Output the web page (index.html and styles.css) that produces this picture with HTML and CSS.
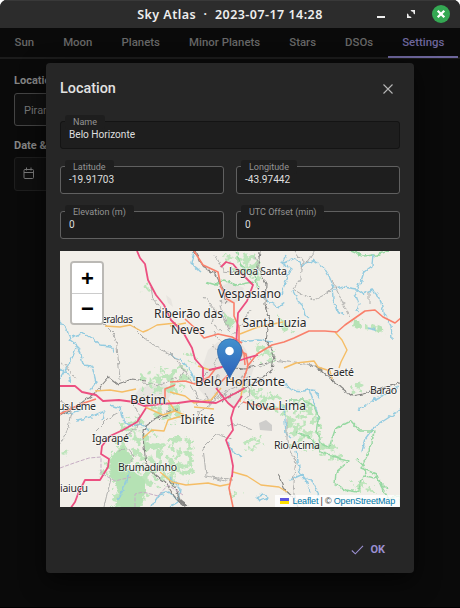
FILE: index.html
```html
<!DOCTYPE html>
<html lang="en">
<head>
<meta charset="utf-8">
<title>Sky Atlas</title>
<link rel="stylesheet" href="styles.css">
</head>
<body>
<div class="window">
  <header class="titlebar">
    <span class="title">Sky Atlas &nbsp;·&nbsp; 2023-07-17 14:28</span>
    <div class="controls">
      <svg width="10" height="18" viewBox="0 0 10 18"><path d="M1 11h8v2H1z" fill="#eee"/></svg>
      <svg width="10" height="18" viewBox="0 0 10 18"><path d="M4.500 5H9v4.500L7.300 8.200V6.800H5.900zM1 8.300l1.700 1.500v1.400h1.500L5.700 13H1z" fill="#eee"/></svg>
      <svg width="18" height="18" viewBox="0 0 18 18"><circle cx="9" cy="9" r="9" fill="#34a853"/><path d="M5.700 5.700l6.600 6.600M12.300 5.700l-6.600 6.600" stroke="#fff" stroke-width="2.300"/></svg>
    </div>
  </header>
  <nav class="tabs">
    <a>Sun</a><a>Moon</a><a>Planets</a><a>Minor Planets</a><a>Stars</a><a>DSOs</a><a class="active">Settings</a>
  </nav>
  <main class="page">
    <div class="label">Location</div>
    <div class="select">Piranga</div>
    <div class="label second">Date &amp; Time</div>
    <div class="date">
      <svg width="12" height="13" viewBox="0 0 12 13" fill="none" stroke="#777"><rect x="1" y="2.500" width="9.500" height="9" rx="1"/><path d="M1 5.500h9.500M3.500 .5v3M8 .5v3"/></svg>
    </div>
  </main>
  <section class="dialog">
    <div class="dialog-head"><h1>Location</h1>
      <svg width="12" height="12" viewBox="0 0 12 12"><path d="M1.500 1.500l9 9M10.500 1.500l-9 9" stroke="#b5b5b5" stroke-width="1.100"/></svg>
    </div>
    <div class="fields">
      <div class="field name"><label>Name</label><span>Belo Horizonte</span></div>
      <div class="field"><label>Latitude</label><span>-19.91703</span></div>
      <div class="field"><label>Longitude</label><span>-43.97442</span></div>
      <div class="field"><label>Elevation (m)</label><span>0</span></div>
      <div class="field"><label>UTC Offset (min)</label><span>0</span></div>
    </div>
    <div class="map">
      <svg class="tiles" width="340" height="256" viewBox="60 251 340 256">
        <defs>
          <filter id="leafy" x="-10%" y="-10%" width="120%" height="120%">
            <feTurbulence type="fractalNoise" baseFrequency=".16" numOctaves="3" seed="4" result="n"/>
            <feDisplacementMap in="SourceGraphic" in2="n" scale="13" xChannelSelector="R" yChannelSelector="G" result="d"/>
            <feColorMatrix in="n" type="matrix" values="0 0 0 0 0  0 0 0 0 0  0 0 0 0 0  0 0 12 0 -5.7" result="m"/>
            <feComposite in="d" in2="m" operator="in"/>
          </filter>
          <filter id="wiggle" x="-10%" y="-10%" width="120%" height="120%" color-interpolation-filters="sRGB">
            <feTurbulence type="fractalNoise" baseFrequency=".2" numOctaves="2" seed="8"/>
            <feDisplacementMap in="SourceGraphic" scale="5" xChannelSelector="R" yChannelSelector="G"/>
          </filter>
        </defs>
        <rect x="60" y="251" width="340" height="256" fill="#f2efe9"/>
        <g class="urban">
          <path d="M208 350l10-8 20-4 8 12 8 18-8 22-10 18-14-12-14 4-10-12 4-20zM218 288l12-6 14 6-6 14-16 2zM140 388l22-6 12 8-8 12-20 4-14-8zM166 295l5 4 2 8-5-4z"/>
          <path class="mine" d="M259 423l7-3 6 5v6l-12-1z"/>
        </g>
        <g class="forest" filter="url(#leafy)">
          <path d="M120 424l16-8 14 12 18 16 14 20-8 22-24 2-10 20h-30l4-26-16-6 10-16 12-20z"/>
          <path d="M142 376l24-10 14 6 8 14-12 10-18-2-20-2zM150 405l26-2 8 12-10 12-18-6zM170 436l20 0 6 20-6 26-18-8zM170 372l12-8 10 6-4 12-16 2zM222 254l26-4 14 14-2 16-20-2zM238 385l22 4 24 10 4 12-26-2-14-8zM225 316l10-2 3 8-9 5zM287 401l24 0 8 18 4 20-14 10-22-16-4-20zM304 434l24 8 24 18-14 2-30-14-20-2zM240 444l20-8 4 10-16 8zM353 318l10 2-3 9-7-2zM368 325l12-2 3 8-14 2zM255 343l18 4 4 18-16 2zM352 385l9-4 1 10-8 2zM348 480l22 5 10 9-22-4zM60 453l10-2-2 6zM140 288l8-3 1 5zM184 351l10 4 4 8-14-4zM228 490l10-4 6 8-12 4zM277 316l14 6 2 10-10-2z"/>
        </g>
        <g class="solid" filter="url(#wiggle)"><path d="M113 478l20-8 12 10 0 12-5 15h-25l4-15zM111 456l12-10 9 10-8 18-14 5z"/><path d="M226 318l6-1 3 5-5 6-5-4zM354 320l6 0 1 5-4 4-4-3zM378 325l5 2-2 6-4-3z"/></g>
        <g class="water" filter="url(#wiggle)">
          <path d="M60 322l7 8 3 10 7 5-4 11-6 11-7 12M72 337l12-4 8 5 8 7 11 1 4 7M77 345l4 9 2 11 9 1 4 16-6 8M60 369l9 6 2 8M110 405l10 3 2 10 9 8 11-2 6 6M77 420l14-3 13-6-2 10M151 507l8-12 10-3 9 8M118 500l5-10 6-18M62 410l10 4 12-6"/>
          <path d="M286 255l-4 8 9 6-6 14-4 11M284 263l11-5 7 7 12-5 9 6 6 10 5 13 9-2 13 2 7 5 9-4 8 8 3 13 8 15 1 13M360 284l4-12 8-6 1-12M376 330l-9-2M359 284l-4 9 4 11-2 7M332 285l1 14 4 12 7 4M293 291l5 10 5 5 2 10 4 2M284 303l-6 4-9-5-7-6M283 383l9 7 12 1 9-2 7 9M358 410l15-10 13-6 13-8M400 410l-12 8-14 9-9 12-3 13M284 406l1 14 1 14 6 4M296 451l4 22 6 7 4 12M290 480l11-5 11 6 7 15M170 478l10 10-2 14-8 5M240 342l18-2 14 2M228 443l5 9 8 4M194 251l-3 12 9 8M170 355l10 4 11 12 5 14M309 390l7 18 3 14"/>
          <path d="M257 497l6-3 5 4-8 3z"/>
        </g>
        <g class="green" filter="url(#wiggle)">
          <path d="M206 282l10 3 8-5 12 5 18-3M236 251l5 15 14 10 3 12M351 251l12 5 13-1 12-4M289 400l13 0 12 6 5 13-2 14 3 10 9 5 6-18 8-5 8-4 9 10 14 0-2 12-6 15-5 10 15 6 5 12 7 12 11-2 2 14M339 459l10 2-13 11-1 12 12 8M296 432l15 6 9 13 21 8M345 490l13 2 5-16 13 2 11 11M357 459l7 6 2 11"/>
        </g>
        <g class="rail" filter="url(#wiggle)">
          <path d="M194 251l9 15 12 8 9 18 2 12M260 251l-2 17 8 16-1 20 5 16-4 20 8 15-2 16-11 7-16 2M60 416l17-10 18-13 14-16 9 7 14-5 14 2M159 420l10-5M143 438l2-12 11-8 10-6 12-3M143 438l3 26 10 12 10 7 10 16 10 8M310 365l11 5 11 10 11 9 9 7 11-2 14-4 13-4 10-3M170 480l6 8 4 13 8 6M278 474l6 15 10 9 4 9M222 401l20-12 22-10M223 367l22 2 21-6"/>
        </g>
        <g class="minor" filter="url(#wiggle)">
          <path d="M104 324l10 10 3 12 2 22 1 12M133 327l12 12 15 10 19 11M295 251l8 10-2 18-8 10 8 5 13 6 10-5 10-8M332 280l7 15 11 22M369 292l0 12M181 366l12 18M170 353l14 16-6 13M60 363l6 3 10 13M60 402l12 5-5 25-8 14M203 448l14-14 15 5M203 448l2 17 1 11 11 2 15 1M213 478l11 3 8-3M133 404l7 12-3 12-11 8M119 451l9-3 6 8-4 6M287 418l0 24 9 20-3 20 2 24M247 376l3 18-12 14M216 256l7 15 16 2M205 393l5 11-12 8 2 9M96 430l11-11 12-7M191 385l7 12-2 10M227 426l12-2 13 6M315 251l-9 12M178 377l-18 8-17-2M104 507l3-13 4-15M204 297l11 13-3 13 10 9M213 332l9 11M260 368l14-8 20 3 20 2M255 257l6 14M151 287l2 12 9 11"/>
          <path d="M200 380l14-14 6-12M206 410l14-16 18-8 8-14M212 346l18 10 14-2 10 8M196 398l18 4 14-10M218 374l-2 22-14 14M232 336l10-12 8-14M220 300l4 18 6 14"/>
        </g>
        <g class="yellow">
          <path d="M105 326l15 1 10-2 13 7 5-2 9-5 19-2M170 326l16-3M240 334l18-7 25-5M335 332l7 8 5 10-6 12-2 6M284 368l12-5 18-2 4 6 12 4 2 8M95 391l15-1 12 2 14-3M145 407l9 4 9 4 12-4M143 438l9-8 12 1 4-11 14-4M160 472l12 10 14 3 22-2 12 3 10-2M233 472l14 4 14 9 18 2 8 5M170 392l15 4 9 7 17-3 10-12M198 366l12 4 10-2M230 379l13 6-3 17M194 407l20 2M168 400l7 11 14 6M299 502l5 3"/>
        </g>
        <g class="orange">
          <path d="M194 251l9 14 15 7 3 15 6 12 7 4 0 13 5 11 0 19M185 319l11 10 8 9 14-4 14 3 10 6M238 342l6 12 1 11M247 367l10-13 15-9 12-3 10-4 15-7 16 0 12 1 8-7 10-7 10-7 10-1 8 7 12 6 6-5 6 0M243 402l13 3 12 4 14 0M232 475l-3 13 4 19M60 414l12-6 12-5 12-4M170 382l15-1 10 3 14-7 7-9M236 349l10 5 2 12-6 18M165 399l0-10 10-4M242 354l-9 16-12 12"/>
        </g>
        <g class="trunk">
          <path d="M137 251l3 7 5 6 3 16 8 15 8 10 7 15 12 12 9 16 3 11 8 9 0 14M60 386l15 0 7 6 14 3 7 6 16-1 15 2 10 4 16-2 18-1 14-2 24 2 16-8 13-7M216 388l12 15 6 5 8-12M234 408l-3 10 2 12-7 10 4 11 3 15-1 11M146 408l-9 14-14 8-13 6-8 10-1 8 8 5-1 8-8 13-15 0-7 14-3 8-5 7M221 267l5-5 7 2 5 6 10 10 5 5-6 16-9 12-1 17-1 17 3 12M209 370l13-3 13-5 12-4 11-3"/>
        </g>
        <g class="boundary"><path d="M60 468l14-5 15-5 12-1 0 16 14 8 16-4M135 507l0-13 8-2 15 4 10-11 15 10"/></g>
        <g class="labels">
          <text x="229" y="275" textLength="58" font-size="10.500">Lagoa Santa</text>
          <text x="218" y="298" textLength="63" font-size="12">Vespasiano</text>
          <text x="154" y="318" textLength="69" font-size="12">Ribeirão das</text>
          <text x="171" y="334" textLength="34" font-size="12">Neves</text>
          <text x="242.500" y="327" textLength="64" font-size="12">Santa Luzia</text>
          <text x="101" y="323" textLength="32" font-size="10.500">eraldas</text>
          <text x="327" y="376" textLength="27" font-size="10.500">Caeté</text>
          <text x="370" y="394" textLength="27" font-size="10.500">Barão</text>
          <text x="195" y="386" textLength="90" font-size="13">Belo Horizonte</text>
          <text x="130" y="403.500" textLength="36" font-size="13">Betim</text>
          <text x="246" y="410" textLength="60" font-size="12">Nova Lima</text>
          <text x="180.500" y="424" textLength="34" font-size="12">Ibirité</text>
          <text x="58" y="410" textLength="38" font-size="10.500">us Leme</text>
          <text x="92" y="442" textLength="37" font-size="10.500">Igarapé</text>
          <text x="274" y="449" textLength="46" font-size="10.500">Rio Acima</text>
          <text x="118" y="471" textLength="59" font-size="10.500">Brumadinho</text>
          <text x="60" y="492" textLength="28" font-size="10.500">iaiuçu</text>
        </g>
        <defs><linearGradient id="pin" x2="0" y2="1"><stop stop-color="#4391ce"/><stop offset="1" stop-color="#2b60b9"/></linearGradient></defs>
        <path d="M229.500 378.500C226 370 217.500 361 217.500 351a12.200 12.200 0 0 1 24.400 0C241.900 361 233 370 229.500 378.500z" fill="url(#pin)" stroke="#316ca8" stroke-width=".8"/>
        <circle cx="229.500" cy="351" r="4.300" fill="#fff"/>
      </svg>
      <div class="zoom"><button>+</button><button>−</button></div>
      <div class="credit"><svg width="10" height="6"><path d="M0 0h9v3H0z" fill="#5c55e0"/><path d="M0 3h9v3H0z" fill="#ffe000"/></svg><a>Leaflet</a> | © <a>OpenStreetMap</a></div>
    </div>
    <footer><svg width="13" height="10" viewBox="0 0 13 10"><path d="M.8 5.500l3.500 3.300L12 .8" fill="none" stroke="#9a8fd0" stroke-width="1.100"/></svg><span>OK</span></footer>
  </section>
</div>
</body>
</html>
```

FILE: styles.css
```css
* { box-sizing: border-box; }
body { margin: 0; background: #fff; font-family: Roboto, sans-serif; }
.window { position: relative; width: 460px; height: 608px; background: #0a0a0a; border-radius: 7px 7px 0 0; overflow: hidden; border-bottom: 1px solid #000; }
.titlebar { height: 28px; background: #2c2c2c; border-top: 1px solid #393939; display: flex; align-items: center; justify-content: center; position: relative; }
.title { font: 600 12.5px/26px "Noto Sans", sans-serif; letter-spacing: .46px; color: #eee; white-space: pre; }
.controls { position: absolute; right: 10px; top: 4px; display: flex; gap: 20px; }
.controls svg { display: block; }
.controls svg:last-child { margin-left: -4px; }
.tabs { height: 31px; display: flex; gap: 1px; border-bottom: 2px solid #1c1c1c; }
.tabs a { padding: 0 14px; font-size: 11.4px; font-weight: 500; line-height: 29px; letter-spacing: .02px; color: #666; height: 30px; white-space: nowrap; }
.tabs .active { color: #6c659b; border-bottom: 2px solid #6c659b; }
.tabs a:first-child { padding-left: 14.5px; }
.page { padding: 14px; color: #858585; }
.label { font-size: 11px; font-weight: 700; line-height: 15px; }
.select { width: 340px; margin-top: 5px; height: 33px; border: 1px solid #444; border-radius: 3px; background: #111; padding-left: 9px; font-size: 11px; line-height: 33px; color: #777; }
.second { margin-top: 12px; }
.date { width: 340px; margin-top: 4px; height: 34px; border: 1px solid #1e1e1e; border-radius: 3px; background: #0f0f0f; padding: 9px 8px; }
.date svg { display: block; }
.dialog { position: absolute; left: 46px; top: 63px; width: 368px; height: 510px; background: #262626; border-radius: 4px; padding: 0 14px; box-shadow: 0 8px 24px #0009; }
.dialog-head { height: 58px; padding: 0 6px 7px 0; display: flex; align-items: center; justify-content: space-between; }
h1 { margin: 0; font-size: 14.4px; font-weight: 500; color: #e2e2e2; }
.fields { display: grid; grid-template-columns: 1fr 1fr; gap: 17px 12px; }
.field { position: relative; height: 28px; border: 1px solid #606060; border-radius: 3px; background: #1e1e1e; padding-left: 8px; font-size: 10.1px; line-height: 26px; color: #dedede; }
.name { grid-column: 1 / 3; border-color: #141414; }
.field label { position: absolute; left: 4px; top: -7px; height: 14px; padding: 0 8px; border-radius: 3px; background: #1e1e1e; font-size: 9px; line-height: 14px; color: #949494; white-space: nowrap; }
.map { position: relative; margin-top: 12px; height: 256px; overflow: hidden; }
.tiles { display: block; }
.tiles g { fill: none; stroke-linejoin: round; }
.tiles .urban { fill: #e8e5e0; }
.tiles .mine { fill: #cecdcb; }
.tiles .forest { fill: #bde5bb; }
.tiles .solid { fill: #b5e2b4; }
.water { stroke: #93cbe0; stroke-width: 1.4; }
.green { stroke: #97d8a2; stroke-width: 1.5; }
.rail { stroke: #858583; stroke-width: 1.1; }
.minor { stroke: #b0b0ae; stroke-width: 1; }
.yellow { stroke: #f5bd65; stroke-width: 1.4; }
.orange { stroke: #f9806b; stroke-width: 1.6; }
.trunk { stroke: #ec4f80; stroke-width: 1.8; }
.boundary { stroke: #c6adc4; stroke-width: 1; stroke-dasharray: 4 1.5; }
.tiles .labels { fill: #292929; stroke: #fff9; stroke-width: 1.6px; paint-order: stroke; font-family: "Noto Sans", sans-serif; }
.zoom { position: absolute; left: 10px; top: 10px; width: 34px; height: 64px; border: 2px solid #bbb9b5; border-radius: 4px; overflow: hidden; }
.zoom button { display: block; width: 30px; height: 30px; padding: 0 0 0 1px; border: 0; background: #fff; color: #000; font: 700 22px/30px "Liberation Sans", sans-serif; }
.zoom button:first-child { height: 31px; padding-top: 1px; border-bottom: 1px solid #ccc; }
.credit { position: absolute; right: 0; bottom: 0; height: 12px; padding: 0 5px; background: #fffc; font: 9px/12px "Liberation Sans", sans-serif; letter-spacing: -.18px; color: #333; white-space: nowrap; }
.credit svg { margin-right: 2px; }
.credit a { color: #0078a8; }
footer { display: flex; justify-content: flex-end; align-items: center; gap: 6px; padding-right: 15px; margin-top: 35px; height: 15px; color: #9a8fd0; font-size: 11px; font-weight: 700; }
```
